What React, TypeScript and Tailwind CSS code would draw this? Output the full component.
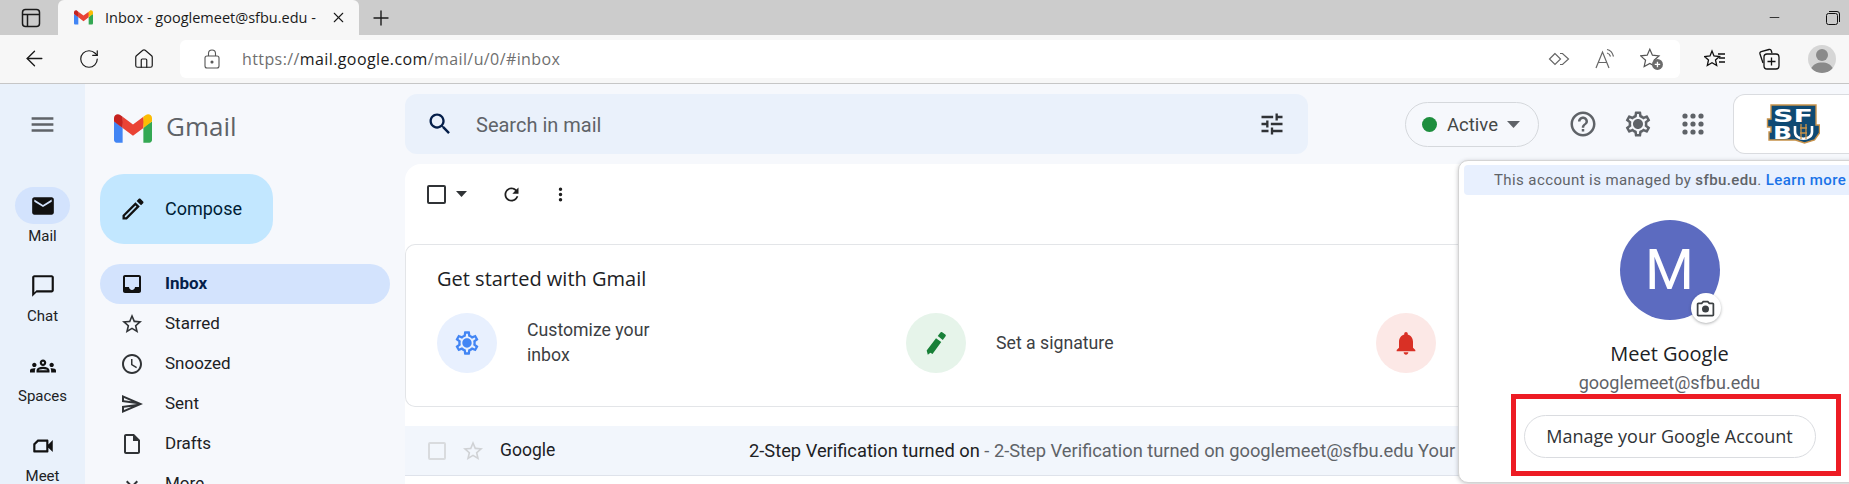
import React from 'react'
import { ArrowLeft, Home, Minus, Plus, RotateCw, X } from 'lucide-react'

const ui = "font-['Roboto',sans-serif]"
const gs = "font-['Open_Sans',sans-serif]"

const Icon = ({ d, size = 24, className = '' }: { d: string; size?: number; className?: string }) => (
  <svg width={size} height={size} viewBox="0 0 24 24" fill="currentColor" className={`shrink-0 ${className}`}>
    <path d={d} />
  </svg>
)

const paths = {
  menu: 'M3 18h18v-2H3v2zm0-5h18v-2H3v2zm0-7v2h18V6H3z',
  search:
    'M15.5 14h-.79l-.28-.27C15.41 12.59 16 11.11 16 9.5 16 5.91 13.09 3 9.5 3S3 5.91 3 9.5 5.91 16 9.5 16c1.61 0 3.09-.59 4.23-1.57l.27.28v.79l5 4.99L20.49 19l-4.99-5zm-6 0C7.01 14 5 11.99 5 9.5S7.01 5 9.5 5 14 7.01 14 9.5 11.99 14 9.5 14z',
  tune: 'M3 17v2h6v-2H3zM3 5v2h10V5H3zm10 16v-2h8v-2h-8v-2h-2v6h2zM7 9v2H3v2h4v2h2V9H7zm14 4v-2H11v2h10zm-6-4h2V7h4V5h-4V3h-2v6z',
  mail: 'M20 4H4c-1.1 0-1.99.9-1.99 2L2 18c0 1.1.9 2 2 2h16c1.1 0 2-.9 2-2V6c0-1.1-.9-2-2-2zm0 4l-8 5-8-5V6l8 5 8-5v2z',
  chat: 'M20 2H4c-1.1 0-2 .9-2 2v18l4-4h14c1.1 0 2-.9 2-2V4c0-1.1-.9-2-2-2zm0 14H6l-2 2V4h16v12z',
  spaces:
    'M4,13c1.1,0,2-0.9,2-2c0-1.1-0.9-2-2-2s-2,0.9-2,2C2,12.1,2.9,13,4,13z M5.13,14.1C4.76,14.04,4.39,14,4,14c-0.99,0-1.93,0.21-2.78,0.58C0.48,14.9,0,15.62,0,16.43V18l4.5,0v-1.61C4.5,15.56,4.73,14.78,5.13,14.1z M20,13c1.1,0,2-0.9,2-2c0-1.1-0.9-2-2-2s-2,0.9-2,2C18,12.1,18.9,13,20,13z M24,16.43c0-0.81-0.48-1.53-1.22-1.85C21.93,14.21,20.99,14,20,14c-0.39,0-0.76,0.04-1.13,0.1c0.4,0.68,0.63,1.46,0.63,2.29V18l4.5,0V16.43z M16.24,13.65c-1.17-0.52-2.61-0.9-4.24-0.9c-1.63,0-3.07,0.39-4.24,0.9C6.68,14.13,6,15.21,6,16.39V18h12v-1.61C18,15.21,17.32,14.13,16.24,13.65z M8.07,16c0.09-0.23,0.13-0.39,0.91-0.69c0.97-0.38,1.99-0.56,3.02-0.56s2.05,0.18,3.02,0.56c0.77,0.3,0.81,0.46,0.91,0.69H8.07z M12,8c0.55,0,1,0.45,1,1s-0.45,1-1,1s-1-0.45-1-1S11.45,8,12,8 M12,6c-1.66,0-3,1.34-3,3c0,1.66,1.34,3,3,3s3-1.34,3-3C15,7.34,13.66,6,12,6L12,6z',
  meet: 'M15 8v8H5v-5.2L7.8 8H15m1-2H7L3 10v7c0 .55.45 1 1 1h12c.55 0 1-.45 1-1v-3.5l4 4v-11l-4 4V7c0-.55-.45-1-1-1z',
  pencil:
    'M14.06 9.02l.92.92L5.92 19H5v-.92l9.06-9.06M17.66 3c-.25 0-.51.1-.7.29l-1.83 1.83 3.75 3.75 1.83-1.83c.39-.39.39-1.02 0-1.41l-2.34-2.34c-.2-.2-.45-.29-.71-.29zm-3.6 3.19L3 17.25V21h3.75L17.81 9.94l-3.75-3.75z',
  inbox:
    'M19 3H4.99c-1.11 0-1.98.9-1.98 2L3 19c0 1.1.88 2 1.99 2H19c1.1 0 2-.9 2-2V5c0-1.1-.9-2-2-2zm0 12h-4c0 1.66-1.35 3-3 3s-3-1.34-3-3H4.99V5H19v10z',
  star: 'M22 9.24l-7.19-.62L12 2 9.19 8.63 2 9.24l5.46 4.73L5.82 21 12 17.27 18.18 21l-1.63-7.03L22 9.24zM12 15.4l-3.76 2.27 1-4.28-3.32-2.88 4.38-.38L12 6.1l1.71 4.04 4.38.38-3.32 2.88 1 4.28L12 15.4z',
  clock:
    'M11.99 2C6.47 2 2 6.48 2 12s4.47 10 9.99 10C17.52 22 22 17.52 22 12S17.52 2 11.99 2zM12 20c-4.42 0-8-3.58-8-8s3.58-8 8-8 8 3.58 8 8-3.58 8-8 8zm.5-13H11v6l5.25 3.15.75-1.23-4.5-2.67z',
  send: 'M4.01 6.03l7.51 3.22-7.52-1 .01-2.22m7.5 8.72L4 17.97v-2.22l7.51-1M2.01 3L2 10l15 2-15 2 .01 7L23 12 2.01 3z',
  draft: 'M14 2H6c-1.1 0-2 .9-2 2v16c0 1.1.9 2 2 2h12c1.1 0 2-.9 2-2V8l-6-6zM6 20V4h7v5h5v11H6z',
  more: 'M16.59 8.59L12 13.17 7.41 8.59 6 10l6 6 6-6z',
  refresh:
    'M17.65 6.35C16.2 4.9 14.21 4 12 4c-4.42 0-7.99 3.58-7.99 8s3.57 8 7.99 8c3.73 0 6.84-2.55 7.73-6h-2.08c-.82 2.33-3.04 4-5.65 4-3.31 0-6-2.69-6-6s2.69-6 6-6c1.66 0 3.14.69 4.22 1.78L13 11h7V4l-2.35 2.35z',
  dots: 'M12 8a2 2 0 100-4 2 2 0 000 4zm0 2a2 2 0 100 4 2 2 0 000-4zm0 6a2 2 0 100 4 2 2 0 000-4z',
  help: 'M11 18h2v-2h-2v2zm1-16C6.48 2 2 6.48 2 12s4.48 10 10 10 10-4.48 10-10S17.52 2 12 2zm0 18c-4.41 0-8-3.59-8-8s3.59-8 8-8 8 3.59 8 8-3.59 8-8 8zm0-14c-2.21 0-4 1.79-4 4h2c0-1.1.9-2 2-2s2 .9 2 2c0 2-3 1.75-3 5h2c0-2.25 3-2.5 3-5 0-2.21-1.79-4-4-4z',
  gear: 'M19.43 12.98c.04-.32.07-.64.07-.98 0-.34-.03-.66-.07-.98l2.11-1.65c.19-.15.24-.42.12-.64l-2-3.46c-.09-.16-.26-.25-.44-.25-.06 0-.12.01-.17.03l-2.49 1c-.52-.4-1.08-.73-1.69-.98l-.38-2.65C14.46 2.18 14.25 2 14 2h-4c-.25 0-.46.18-.49.42l-.38 2.65c-.61.25-1.17.59-1.69.98l-2.49-1c-.06-.02-.12-.03-.18-.03-.17 0-.34.09-.43.25l-2 3.46c-.13.22-.07.49.12.64l2.11 1.65c-.04.32-.07.65-.07.98 0 .33.03.66.07.98l-2.11 1.65c-.19.15-.24.42-.12.64l2 3.46c.09.16.26.25.44.25.06 0 .12-.01.17-.03l2.49-1c.52.4 1.08.73 1.69.98l.38 2.65c.03.24.24.42.49.42h4c.25 0 .46-.18.49-.42l.38-2.65c.61-.25 1.17-.59 1.69-.98l2.49 1c.06.02.12.03.18.03.17 0 .34-.09.43-.25l2-3.46c.12-.22.07-.49-.12-.64l-2.11-1.65zm-1.98-1.71c.04.31.05.52.05.73 0 .21-.02.43-.05.73l-.14 1.13.89.7 1.08.84-.7 1.21-1.27-.51-1.04-.42-.9.68c-.43.32-.84.56-1.25.73l-1.06.43-.16 1.13-.2 1.35h-1.4l-.19-1.35-.16-1.13-1.06-.43c-.43-.18-.83-.41-1.23-.71l-.91-.7-1.06.43-1.27.51-.7-1.21 1.08-.84.89-.7-.14-1.13c-.03-.31-.05-.54-.05-.74s.02-.43.05-.73l.14-1.13-.89-.7-1.08-.84.7-1.21 1.27.51 1.04.42.9-.68c.43-.32.84-.56 1.25-.73l1.06-.43.16-1.13.2-1.35h1.39l.19 1.35.16 1.13 1.06.43c.43.18.83.41 1.23.71l.91.7 1.06-.43 1.27-.51.7 1.21-1.07.85-.89.7.14 1.13zM12 8c-2.21 0-4 1.79-4 4s1.79 4 4 4 4-1.79 4-4-1.79-4-4-4z',
  bell: 'M12 22c1.1 0 2-.9 2-2h-4c0 1.1.9 2 2 2zm6-6v-5c0-3.07-1.63-5.64-4.5-6.32V4c0-.83-.67-1.5-1.5-1.5s-1.5.67-1.5 1.5v.68C7.64 5.36 6 7.92 6 11v5l-2 2v1h16v-1l-2-2z',
  marker: 'M5 22l-1-3.500 8-10.500 4.500 3.200L9 21.500 7.200 20.300zM13.500 6l2.300-3c.4-.5 1-.6 1.500-.2l2.700 1.900c.5.4.6 1 .2 1.500l-2.400 3.200z',
  camera:
    'M20 5h-3.17L15 3H9L7.17 5H4c-1.1 0-2 .9-2 2v12c0 1.1.9 2 2 2h16c1.1 0 2-.9 2-2V7c0-1.1-.9-2-2-2zm0 14H4V7h4.05l1.83-2h4.24l1.83 2H20v12zM12 8.500a4 4 0 100 8 4 4 0 000-8z',
}

const GmailLogo = ({ w, h }: { w: number; h: number }) => (
  <svg width={w} height={h} viewBox="0 0 256 193" className="shrink-0">
    <path fill="#4285F4" d="M58.18 192.05V93.14L27.5 65.08 0 49.5v125.09c0 9.66 7.83 17.46 17.45 17.46h40.73z" />
    <path fill="#34A853" d="M197.82 192.05h40.73c9.65 0 17.45-7.83 17.45-17.46V49.5l-31.16 17.84-27.02 25.8v98.91z" />
    <path fill="#EA4335" d="M58.18 93.14l-4.17-38.65 4.17-36.99L128 69.87l69.82-52.37 4.67 35-4.67 40.64L128 145.5z" />
    <path fill="#FBBC04" d="M197.82 17.5v75.64L256 49.5V26.23c0-21.59-24.64-33.88-41.89-20.95l-16.29 12.22z" />
    <path fill="#C5221F" d="M0 49.5l26.76 20.07L58.18 93.14V17.5L41.89 5.28C24.61-7.65 0 4.64 0 26.23V49.5z" />
  </svg>
)

const SfbuLogo = () => (
  <svg width="54" height="40" viewBox="0 0 54 40">
    <path
      d="M5 1h45v20h3.500v8l-5 7-10 3-9-3H3v-8h2v-5H1.500v-8H5z"
      fill="#0f4a73"
      stroke="#c8924a"
      strokeWidth="1.4"
    />
    <text
      x="7"
      y="18"
      fill="#fff"
      fontSize="18"
      fontWeight="900"
      fontFamily="'DejaVu Sans',sans-serif"
      textLength="40"
      lengthAdjust="spacingAndGlyphs"
    >
      SF
    </text>
    <text
      x="7"
      y="35"
      fill="#fff"
      fontSize="18"
      fontWeight="900"
      fontFamily="'DejaVu Sans',sans-serif"
      textLength="19"
      lengthAdjust="spacingAndGlyphs"
    >
      B
    </text>
    <path d="M29 22v6c0 9 17 9 17 0v-6" fill="none" stroke="#fff" strokeWidth="2.600" />
    <path d="M35 20v15M40 20v15M34 24h7M34 29h7" stroke="#c8924a" strokeWidth="1.300" />
  </svg>
)

const TabBar = () => (
  <div className="flex h-[35px] shrink-0 items-center bg-[#cccccc]">
    <div className="flex w-[58px] justify-center pl-[3px]">
      <svg width="20" height="20" viewBox="0 0 20 20" fill="none" stroke="#1a1a1a" strokeWidth="1.5">
        <rect x="1.500" y="1.500" width="17" height="17" rx="3" />
        <path d="M2 6.500h16M6.500 6.500v12" />
      </svg>
    </div>
    <div className="flex h-[35px] w-[301px] items-center rounded-t-[6px] bg-[#f7f7f7] pl-[16px]">
      <GmailLogo w={19} h={15} />
      <span className={`ml-[12px] w-[222px] overflow-hidden whitespace-nowrap text-[14.5px] text-[#1a1a1a] ${gs}`}>
        Inbox - googlemeet@sfbu.edu -
      </span>
      <X size={17} strokeWidth={1.5} className="ml-[3px] text-[#1a1a1a]" />
    </div>
    <Plus size={24} strokeWidth={1.4} className="ml-[10px] text-[#1a1a1a]" />
    <div className="ml-auto flex items-center gap-[44px] pr-[9px]">
      <Minus size={15} strokeWidth={1.3} className="text-[#111]" />
      <svg width="14" height="14" viewBox="0 0 14 14" fill="none" stroke="#111" strokeWidth="1">
        <rect x="0.500" y="2.500" width="11" height="11" rx="2" />
        <path d="M3 .5h8a2.500 2.500 0 012.500 2.500v8" />
      </svg>
    </div>
  </div>
)

const AddressBar = () => (
  <div className="flex h-[49px] shrink-0 items-center border-b border-[#c6c6c6] bg-[#f7f7f7] pb-[1px]">
    <div className="flex w-[180px] items-center pl-[22px]">
      <ArrowLeft size={25} strokeWidth={1.3} className="text-[#1a1a1a]" />
      <RotateCw size={22} strokeWidth={1.3} className="ml-[31px] text-[#1a1a1a]" />
      <Home size={22} strokeWidth={1.3} className="ml-[33px] text-[#1a1a1a]" />
    </div>
    <div className="flex h-[38px] w-[1500px] items-center rounded-[6px] bg-white">
      <svg width="16" height="20" viewBox="0 0 16 20" fill="none" stroke="#555" strokeWidth="1.1" className="ml-[24px]">
        <rect x="1" y="7" width="14" height="12" rx="2" />
        <path d="M4.500 7V4.500a3.500 3.500 0 017 0V7" />
        <circle cx="8" cy="13" r="1" fill="#555" />
      </svg>
      <span className={`ml-[22px] text-[16px] tracking-[0.025em] text-[#6f6f6f] ${gs}`}>
        https://<span className="text-[#1a1a1a]">mail.google.com</span>/mail/u/0/#inbox
      </span>
      <div className="ml-auto flex items-center pr-[16px]">
        <svg width="22" height="14" viewBox="0 0 22 14" fill="none" stroke="#666" strokeWidth="1.2">
          <path d="M7 1.500L1.500 7 7 12.500 12.500 7z" />
          <path d="M12 1.500h2.500L20.500 7l-6 5.500H12" />
        </svg>
        <svg width="22" height="22" viewBox="0 0 22 22" fill="none" stroke="#666" strokeWidth="1.2" className="ml-[25px]">
          <path d="M1 20L7.500 4l6.500 16M3.500 14.500h8M12 1.500c3.500.5 5.500 3 6.500 7M12 5c2 .5 3 1.500 3.500 3.500" />
        </svg>
        <svg width="24" height="24" viewBox="0 0 22 22" className="ml-[23px]">
          <path d="M9 2l2.400 5.500 6 .6-4.500 4 1.300 5.900L9 15l-5.200 3 1.300-5.900-4.500-4 6-.6z" fill="none" stroke="#555" strokeWidth="1.1" />
          <circle cx="16" cy="16" r="5" fill="#6b6b6b" />
          <path d="M16 13.500v5M13.500 16h5" stroke="#fff" strokeWidth="1.2" />
        </svg>
      </div>
    </div>
    <div className="flex flex-1 items-center pl-[24px]">
      <svg width="22" height="20" viewBox="0 0 22 20" fill="none" stroke="#111" strokeWidth="1.3">
        <path d="M8 2l2 5 5.500.5-4 3.500 1.200 5.500L8 13.800 3.300 16.500 4.500 11l-4-3.500L6 7z" />
        <path d="M14 5h7M15 9h6M15 13h6" />
      </svg>
      <svg width="22" height="22" viewBox="0 0 22 22" fill="none" stroke="#111" strokeWidth="1.3" className="ml-[32px]">
        <path d="M5 15L2 6c-.3-1 .2-2 1.200-2.300L11 1.500c1-.3 2 .2 2.300 1.200L14 5" />
        <rect x="6" y="6" width="15" height="15" rx="3" />
        <path d="M13.500 9.500v8M9.500 13.500h8" />
      </svg>
      <div className="ml-[28px] flex size-[28px] items-center justify-center overflow-hidden rounded-full bg-[#d6d6d6]">
        <svg width="28" height="28" viewBox="0 0 28 28" fill="#8a8a8a">
          <circle cx="14" cy="10" r="6" />
          <path d="M3 24c2-5 6-6.500 11-6.500S23 19 25 24c-3 3-7 4-11 4s-8-1-11-4z" />
        </svg>
      </div>
    </div>
  </div>
)

const railItems = [
  { label: 'Mail', d: paths.mail, active: true },
  { label: 'Chat', d: paths.chat },
  { label: 'Spaces', d: paths.spaces },
  { label: 'Meet', d: paths.meet },
]

const Rail = () => (
  <div className={`flex w-[85px] shrink-0 flex-col items-center overflow-hidden bg-[#e9f1fb] ${ui}`}>
    <Icon d={paths.menu} size={29} className="mt-[26px] text-[#5f6368]" />
    <div className="mt-[48px] flex flex-col items-center gap-[7px]">
      {railItems.map((item) => (
        <div key={item.label} className="flex h-[73px] flex-col items-center">
          <div
            className={`flex h-[37px] w-[55px] items-center justify-center rounded-full ${
              item.active ? 'bg-[#d3e3fd]' : ''
            } text-[#111]`}
          >
            <Icon d={item.d} size={26} />
          </div>
          <span className="mt-[2px] text-[15px] leading-[20px] text-[#202124]">{item.label}</span>
        </div>
      ))}
    </div>
  </div>
)

const navItems = [
  { label: 'Inbox', d: paths.inbox, active: true },
  { label: 'Starred', d: paths.star },
  { label: 'Snoozed', d: paths.clock },
  { label: 'Sent', d: paths.send },
  { label: 'Drafts', d: paths.draft },
  { label: 'More', d: paths.more },
]

const Nav = () => (
  <div className={`w-[320px] shrink-0 overflow-hidden bg-[#f6f8fc] ${ui}`}>
    <div className="flex h-[90px] items-center pb-[2px] pl-[29px]">
      <GmailLogo w={38} h={29} />
      <span className={`mb-[3px] ml-[14px] text-[26px] text-[#5f6368] ${gs}`}>Gmail</span>
    </div>
    <div className="ml-[15px] flex h-[70px] w-[173px] items-center rounded-[24px] bg-[#c2e7ff] pl-[19px] text-[#001d35]">
      <Icon d={paths.pencil} size={28} className="text-[#111]" />
      <span className="mb-[1px] ml-[18px] text-[18px]">Compose</span>
    </div>
    <div className="mt-[20px] flex flex-col">
      {navItems.map((item) => (
        <div
          key={item.label}
          className={`ml-[15px] flex h-[40px] w-[290px] shrink-0 items-center rounded-full pl-[20px] ${
            item.active ? 'bg-[#d3e3fd] font-bold text-[#041e49]' : 'text-[#202124]'
          }`}
        >
          <Icon d={item.d} size={24} className={item.active ? 'text-[#111]' : 'text-[#303336]'} />
          <span className="ml-[21px] text-[17px]">{item.label}</span>
        </div>
      ))}
    </div>
  </div>
)

const Header = () => (
  <div className={`flex h-[80px] shrink-0 items-center ${ui}`}>
    <div className="flex h-[60px] w-[903px] items-center rounded-[12px] bg-[#eaf1fb] pl-[21px]">
      <Icon d={paths.search} size={28} className="text-[#041e49]" />
      <span className="ml-[22px] pt-[1px] text-[20px] text-[#5f6368]">Search in mail</span>
      <Icon d={paths.tune} size={28} className="ml-auto mr-[22px] text-[#303336]" />
    </div>
    <div className="ml-[97px] flex h-[45px] w-[134px] items-center rounded-full border border-[#d5d8dc] pl-[16px]">
      <span className="size-[15px] rounded-full bg-[#1e8e3e]" />
      <span className="ml-[10px] pt-[2px] text-[18.5px] leading-[24px] text-[#444746]">Active</span>
      <svg width="13" height="7" viewBox="0 0 13 7" fill="#5f6368" className="ml-[9px]">
        <path d="M0 0h13L6.500 7z" />
      </svg>
    </div>
    <Icon d={paths.help} size={30} className="ml-[29px] text-[#5f6368]" />
    <Icon d={paths.gear} size={30} className="ml-[25px] text-[#5f6368]" />
    <svg width="22" height="22" viewBox="0 0 22 22" fill="#5f6368" className="ml-[29px]">
      {[3, 11, 19].flatMap((y) =>
        [3, 11, 19].map((x) => <circle key={`${x}-${y}`} cx={x} cy={y} r="2.6" />)
      )}
    </svg>
    <div className="ml-[29px] flex h-[60px] flex-1 items-center rounded-l-[12px] border border-r-0 border-[#dadce0] bg-white pl-[32px]">
      <SfbuLogo />
    </div>
  </div>
)

const setupCards = [
  { d: paths.gear, circle: 'bg-[#e8f0fe]', color: 'text-[#4285f4]', text: ['Customize your', 'inbox'], width: 'w-[469px]' },
  { d: paths.marker, circle: 'bg-[#e6f4ea]', color: 'text-[#188038]', text: ['Set a signature'], width: 'w-[470px]' },
  { d: paths.bell, circle: 'bg-[#fce8e6]', color: 'text-[#d93025]', text: [], width: 'w-[100px]' },
]

const Main = () => (
  <div className={`flex min-w-0 flex-1 flex-col ${ui}`}>
    <Header />
    <div className="flex-1 rounded-t-[16px] bg-white">
      <div className="mb-[20px] flex h-[60px] items-center pl-[22px] text-[#1f1f1f]">
        <span className="size-[19px] rounded-[2px] border-2 border-[#303336]" />
        <svg width="11" height="6" viewBox="0 0 11 6" fill="#303336" className="ml-[10px]">
          <path d="M0 0h11L5.500 6z" />
        </svg>
        <Icon d={paths.refresh} size={21} className="ml-[34px]" />
        <Icon d={paths.dots} size={21} className="ml-[28px]" />
      </div>
      <div className="h-[163px] rounded-l-[10px] border border-r-0 border-[#e3e5e8] pl-[31px] pt-[19px]">
        <div className={`text-[20px] leading-[30px] text-[#202124] ${gs}`}>Get started with Gmail</div>
        <div className="mt-[19px] flex">
          {setupCards.map((card) => (
            <div key={card.d} className={`flex items-center ${card.width}`}>
              <span className={`flex size-[60px] shrink-0 items-center justify-center rounded-full ${card.circle}`}>
                <Icon d={card.d} size={28} className={card.color} />
              </span>
              <span className="ml-[30px] text-[17.7px] leading-[25px] text-[#3c4043]">
                {card.text.map((t) => (
                  <div key={t}>{t}</div>
                ))}
              </span>
            </div>
          ))}
        </div>
      </div>
      <div className="mt-[19px] flex h-[50px] items-center border-b border-[#dfe3eb] bg-[#f2f6fc] pl-[23px] text-[17.5px] text-[#202124]">
        <span className="size-[18px] rounded-[2px] border-2 border-[#d9dbde]" />
        <Icon d={paths.star} size={24} className="ml-[15px] text-[#d0d2d5]" />
        <span className="ml-[15px] w-[249px] shrink-0">Google</span>
        <span className="min-w-0 whitespace-nowrap text-[18.3px]">
          2-Step Verification turned on
          <span className="text-[#5f6368]"> - 2-Step Verification turned on googlemeet@sfbu.edu Your Google Account</span>
        </span>
      </div>
    </div>
  </div>
)

const AccountPopup = () => (
  <div
    className={`absolute left-[1458px] top-[160px] h-[323px] w-[400px] rounded-l-[10px] border border-[#d4d4d4] bg-white pl-[5px] pt-[4px] shadow-[0_1px_4px_rgba(60,64,67,0.3)] ${ui}`}
  >
    <div className="flex h-[30px] items-center rounded-l-[4px] bg-[#e8f0fe] pl-[30px] text-[15px] tracking-[0.4px] text-[#5f6368] whitespace-nowrap">
      This account is managed by&nbsp;<span className="font-medium">sfbu.edu</span>.&nbsp;
      <span className="font-medium text-[#1a73e8]">Learn more</span>
    </div>
    <div className="ml-[-5px] flex w-[421px] flex-col items-center pt-[25px]">
      <div className="relative flex size-[100px] items-center justify-center rounded-full bg-[#5c6bc0] text-[56px] leading-none text-white">
        M
        <span className="absolute left-[71px] top-[73px] flex size-[30px] items-center justify-center rounded-full bg-white shadow-[0_1px_3px_rgba(60,64,67,0.4)]">
          <Icon d={paths.camera} size={21} className="text-[#3c4043]" />
        </span>
      </div>
      <div className={`mt-[22px] text-[20px] font-medium leading-[24px] text-[#202124] ${gs}`}>Meet Google</div>
      <div className="mt-[5px] text-[18px] leading-[24px] text-[#5f6368]">googlemeet@sfbu.edu</div>
      <div className={`mt-[20px] flex h-[43px] w-[292px] items-center justify-center rounded-full border border-[#dadce0] text-[18px] font-medium text-[#303336] ${gs}`}>
        Manage your Google Account
      </div>
    </div>
    <div className="absolute left-[52px] top-[233px] h-[82px] w-[330px] border-[5px] border-[#ed1c24]" />
  </div>
)

const App = () => {
  return (
    <div className="relative flex h-[484px] w-[1849px] flex-col overflow-hidden bg-[#f6f8fc]">
      <TabBar />
      <AddressBar />
      <div className="flex min-h-0 flex-1">
        <Rail />
        <Nav />
        <Main />
      </div>
      <AccountPopup />
    </div>
  )
}

export default App
